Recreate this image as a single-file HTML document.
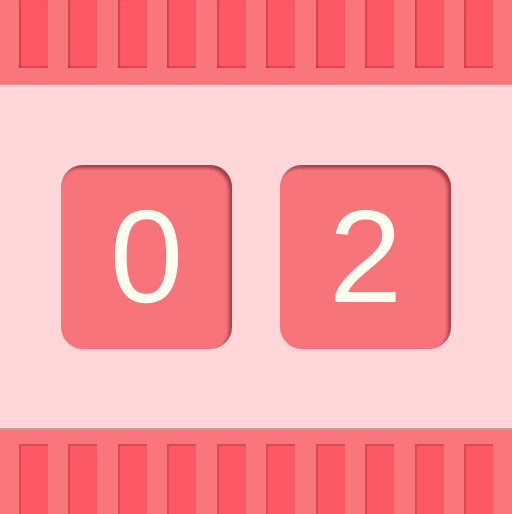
<!DOCTYPE html><html><head><style>
body{margin:0;width:512px;height:512px;background:#ffd7d9;position:relative;overflow:hidden;font-family:"Liberation Sans",sans-serif}
.band{position:absolute;left:0;width:512px;height:84px;background:#f8767c}
.top{top:0;box-shadow:0 1px 0 #fb8d91}
.bot{top:428px;border-top:2px solid #c99a9a;height:84px}
.s{position:absolute;width:29px;background:#fd5965;box-shadow:inset 2px 0 1px rgba(150,30,40,.35),inset 0 -2px 1px rgba(150,30,40,.3)}
.top .s{top:0;height:68px}
.bot .s{top:14px;height:70px;box-shadow:inset 2px 2px 1px rgba(150,30,40,.3)}
.box{position:absolute;top:165px;width:171px;height:184px;border-radius:22px;background:#f8747b;box-shadow:inset -3px 3px 3px rgba(90,20,25,.55)}
.d{position:absolute;left:0;width:100%;text-align:center;font-size:132px;line-height:0;color:#fffdf0}
</style></head><body>
<div class="band top">
<div class="s" style="left:19px"></div><div class="s" style="left:68px"></div><div class="s" style="left:118px"></div><div class="s" style="left:167px"></div><div class="s" style="left:217px"></div><div class="s" style="left:266px"></div><div class="s" style="left:316px"></div><div class="s" style="left:365px"></div><div class="s" style="left:415px"></div><div class="s" style="left:464px"></div>
</div>
<div class="band bot">
<div class="s" style="left:19px"></div><div class="s" style="left:68px"></div><div class="s" style="left:118px"></div><div class="s" style="left:167px"></div><div class="s" style="left:217px"></div><div class="s" style="left:266px"></div><div class="s" style="left:316px"></div><div class="s" style="left:365px"></div><div class="s" style="left:415px"></div><div class="s" style="left:464px"></div>
</div>
<div class="box" style="left:61px"><div class="d" style="top:92px">0</div></div>
<div class="box" style="left:280px"><div class="d" style="top:92px">2</div></div>
</body></html>
